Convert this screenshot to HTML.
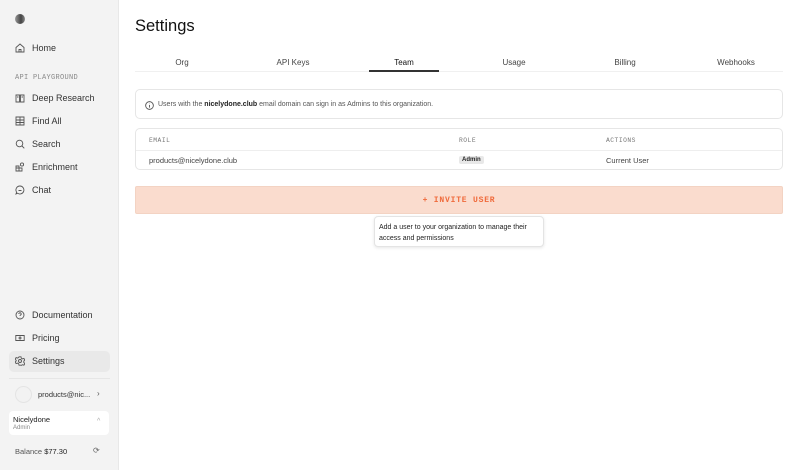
<!DOCTYPE html>
<html><head><meta charset="utf-8"><style>
*{box-sizing:border-box;margin:0;padding:0}
body{width:800px;height:470px;font-family:"Liberation Sans",sans-serif;background:#fff;position:relative;overflow:hidden;color:#222}
.side{position:absolute;left:0;top:0;width:119px;height:470px;background:#f3f3f3;border-right:1px solid #e8e8e8}
.logo{position:absolute;left:15px;top:14px;width:10px;height:10px;border-radius:50%;background:linear-gradient(90deg,#999,#444 60%,#888)}
.it{position:absolute;left:15px;font-size:9px;color:#333;display:flex;align-items:center;gap:7px}
.it svg{width:10px;height:10px;stroke:#555;fill:none;stroke-width:.9}
.sec{position:absolute;left:15px;top:74px;font-family:"Liberation Mono",monospace;font-size:7px;color:#888;letter-spacing:.3px}
.act{position:absolute;left:9px;top:351px;width:101px;height:21px;background:#e9e9e9;border-radius:5px}
.main{position:absolute;left:135px;top:0;width:648px}
h1{position:absolute;left:0;top:17px;font-size:16.5px;font-weight:normal;color:#111}
.tabs{position:absolute;top:57px;left:0;width:648px;height:15px;border-bottom:1.5px solid #f0f0f0}
.tabs div{position:absolute;width:100px;margin-left:-50px;text-align:center;font-size:8px;color:#444;top:1px}
.tabs .on{color:#111}
.tabs .on:after{content:"";position:absolute;left:0;right:0;top:12px;height:2px;background:#333}
.box{position:absolute;border:1px solid #e6e6e6;border-radius:5px;background:#fff}
</style></head><body>
<div class="side">
<div class="logo"></div>
<div class="it" style="top:43px"><svg viewBox="0 0 10 10"><path d="M1 4.5L5 1l4 3.5V9H1z M4 9V6.5h2V9"/></svg>Home</div>
<div class="sec">API PLAYGROUND</div>
<div class="it" style="top:93px"><svg viewBox="0 0 10 10"><path d="M1 2h3.5v7H1z M5.5 2H9v7H5.5z M2 4h1.5M6.5 4H8"/></svg>Deep Research</div>
<div class="it" style="top:116px"><svg viewBox="0 0 10 10"><path d="M1 1h8v8H1z M1 4h8M1 6.5h8M5 1v8"/></svg>Find All</div>
<div class="it" style="top:139px"><svg viewBox="0 0 10 10"><circle cx="4.5" cy="4.5" r="3.3"/><path d="M7 7l2.3 2.3"/></svg>Search</div>
<div class="it" style="top:162px"><svg viewBox="0 0 10 10"><path d="M1 4h3v5H1z M4 6h3v3H4z M1 6h3"/><circle cx="7" cy="2.5" r="1.6"/></svg>Enrichment</div>
<div class="it" style="top:185px"><svg viewBox="0 0 10 10"><path d="M5 1a4 4 0 1 1-2.5 7.2L1 9l.6-1.8A4 4 0 0 1 5 1z M3.5 5.5h3"/></svg>Chat</div>
<div class="it" style="top:310px"><svg viewBox="0 0 10 10"><circle cx="5" cy="5" r="4"/><path d="M3.8 4a1.2 1.2 0 1 1 1.6 1.1c-.4.2-.4.5-.4.9M5 7.3v.2"/></svg>Documentation</div>
<div class="it" style="top:333px"><svg viewBox="0 0 10 10"><path d="M.8 2.5h8.4v5H.8z"/><circle cx="5" cy="5" r="1"/></svg>Pricing</div>
<div class="act"></div>
<div class="it" style="top:356px"><svg viewBox="0 0 10 10"><circle cx="5" cy="5" r="1.5"/><path d="M4 .8h2l.3 1.4 1.2.7 1.4-.5 1 1.7-1.1 1v1.4l1.1 1-1 1.7-1.4-.5-1.2.7L6 9.2H4l-.3-1.4-1.2-.7-1.4.5-1-1.7 1.1-1V4.3L.1 3.3l1-1.7 1.4.5 1.2-.7z"/></svg>Settings</div>
<div style="position:absolute;left:9px;top:378px;width:101px;height:1px;background:#e6e6e6"></div>
<div style="position:absolute;left:15px;top:386px;width:17px;height:17px;border-radius:50%;border:1px solid #e4e4e4;background:#f2f2f2"></div>
<div style="position:absolute;left:38px;top:390px;font-size:7.5px;color:#333">products@nic...</div>
<div style="position:absolute;left:97px;top:389px;font-size:8px;color:#555">›</div>
<div style="position:absolute;left:9px;top:411px;width:100px;height:24px;background:#fff;border-radius:4px"></div>
<div style="position:absolute;left:13px;top:415px;font-size:7.5px;color:#222">Nicelydone</div>
<div style="position:absolute;left:13px;top:425px;font-size:6px;color:#888">Admin</div>
<div style="position:absolute;left:97px;top:418px;font-size:7px;color:#aaa">^</div>
<div style="position:absolute;left:15px;top:447px;font-size:7.5px;color:#555">Balance <span style="color:#222">$77.30</span></div>
<div style="position:absolute;left:93px;top:446px;font-size:8px;color:#666">⟳</div>
</div>
<div class="main">
<h1>Settings</h1>
<div class="tabs"><div style="left:47px">Org</div><div style="left:158px">API Keys</div><div class="on" style="left:269px;width:70px;margin-left:-35px">Team</div><div style="left:379px">Usage</div><div style="left:490px">Billing</div><div style="left:601px">Webhooks</div></div>
<div class="box" style="left:0;top:89px;width:648px;height:30px">
<svg style="position:absolute;left:9px;top:11px" width="9" height="9" viewBox="0 0 10 10" fill="none" stroke="#555" stroke-width="1"><circle cx="5" cy="5" r="4.3"/><path d="M5 4.3v3M5 2.8v.3"/></svg>
<div style="position:absolute;left:22px;top:11px;font-size:7px;color:#555">Users with the <b style="color:#222">nicelydone.club</b> email domain can sign in as Admins to this organization.</div></div>
<div class="box" style="left:0;top:128px;width:648px;height:42px">
<div style="position:absolute;left:0;top:21px;width:100%;height:1px;background:#eee"></div>
<div style="position:absolute;left:13px;top:8px;font-family:'Liberation Mono',monospace;font-size:6.3px;color:#777;letter-spacing:.5px">EMAIL</div>
<div style="position:absolute;left:323px;top:8px;font-family:'Liberation Mono',monospace;font-size:6.3px;color:#777;letter-spacing:.5px">ROLE</div>
<div style="position:absolute;left:470px;top:8px;font-family:'Liberation Mono',monospace;font-size:6.3px;color:#777;letter-spacing:.5px">ACTIONS</div>
<div style="position:absolute;left:13px;top:27px;font-size:7.5px;color:#444">products@nicelydone.club</div>
<div style="position:absolute;left:323px;top:27px;background:#e8e8e8;border-radius:2px;padding:1px 3px;font-size:6px;color:#222;font-weight:bold">Admin</div>
<div style="position:absolute;left:470px;top:27px;font-size:7.5px;color:#444">Current User</div>
</div>
<div style="position:absolute;left:0;top:186px;width:648px;height:28px;background:#fadcce;border:1px solid #f3d3c3;border-radius:2px;text-align:center;line-height:28px;font-family:'Liberation Mono',monospace;font-size:8px;font-weight:bold;color:#f06a3b;letter-spacing:.8px">+ INVITE USER</div>
<div style="position:absolute;left:239px;top:216px;width:170px;height:31px;background:#fff;border:1px solid #e4e4e4;border-radius:4px;box-shadow:0 1px 3px rgba(0,0,0,.1);padding:5px 4px;font-size:7px;line-height:11px;color:#222">Add a user to your organization to manage their access and permissions</div>
</div>
</body></html>
